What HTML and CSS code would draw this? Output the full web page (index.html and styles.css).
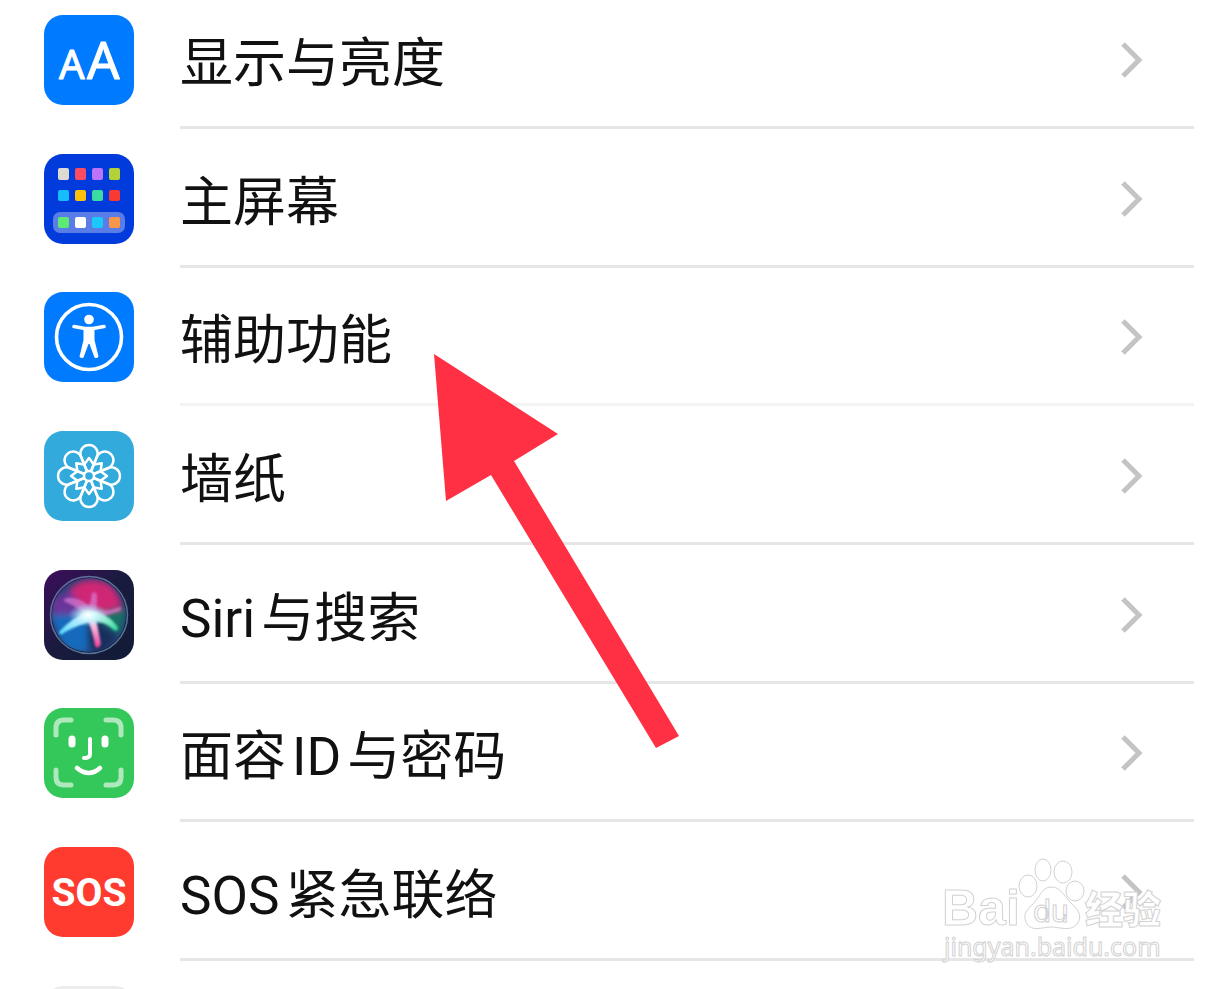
FILE: index.html
```html
<!DOCTYPE html>
<html lang="zh-CN">
<head>
<meta charset="utf-8">
<meta name="viewport" content="width=device-width, initial-scale=1">
<title>设置</title>
<link rel="stylesheet" href="styles.css">
</head>
<body>
<main class="screen">
  <nav class="settings" aria-label="设置">
    <a class="row" href="#display">
      <svg class="icon" viewBox="0 0 90 90" aria-hidden="true">
        <rect width="90" height="90" rx="19" fill="#007aff"/>
        <g class="icon-aa"><text x="15" y="64" font-size="40">A</text><text x="43" y="64" font-size="51">A</text></g>
      </svg>
      <span class="label">显示与亮度</span>
      <svg class="chevron" viewBox="0 0 24 40" aria-hidden="true"><path d="M3 4 19 20 3 36"/></svg>
    </a>
    <a class="row" href="#home">
      <svg class="icon" viewBox="0 0 90 90" aria-hidden="true">
        <rect width="90" height="90" rx="19" fill="#023bdb"/>
        <rect x="9" y="58" width="72" height="21" rx="7" fill="#5a7ce6"/>
        <rect x="14" y="14" width="11" height="12" rx="2" fill="#dedbd2"/>
        <rect x="31" y="14" width="11" height="12" rx="2" fill="#fc4c62"/>
        <rect x="48" y="14" width="11" height="12" rx="2" fill="#bb73f8"/>
        <rect x="65" y="14" width="11" height="12" rx="2" fill="#b2d236"/>
        <rect x="14" y="36" width="11" height="11" rx="2" fill="#16bdfb"/>
        <rect x="31" y="36" width="11" height="11" rx="2" fill="#fcc108"/>
        <rect x="48" y="36" width="11" height="11" rx="2" fill="#3bdba2"/>
        <rect x="65" y="36" width="11" height="11" rx="2" fill="#fa3a32"/>
        <rect x="14" y="63" width="11" height="11" rx="2" fill="#5cea72"/>
        <rect x="31" y="63" width="11" height="11" rx="2" fill="#fff"/>
        <rect x="48" y="63" width="11" height="11" rx="2" fill="#1cc8fa"/>
        <rect x="65" y="63" width="11" height="11" rx="2" fill="#f9964a"/>
      </svg>
      <span class="label">主屏幕</span>
      <svg class="chevron" viewBox="0 0 24 40" aria-hidden="true"><path d="M3 4 19 20 3 36"/></svg>
    </a>
    <a class="row row-faint" href="#accessibility">
      <svg class="icon" viewBox="0 0 90 90" aria-hidden="true">
        <rect width="90" height="90" rx="19" fill="#007aff"/>
        <circle cx="45" cy="45" r="32.5" fill="none" stroke="#fff" stroke-width="3.6"/>
        <circle cx="45" cy="27.5" r="4.8" fill="#fff"/>
        <path d="M30 34.500 41 36.500H49L60 34.500" fill="none" stroke="#fff" stroke-width="3.600" stroke-linecap="round" stroke-linejoin="round"/>
        <path d="M39.500 36H50.500V48L54.500 64.500Q53 67 50.500 65.500L45.500 52H44.500L39.500 65.500Q37 67 35.500 64.500L39.500 48Z" fill="#fff"/>
      </svg>
      <span class="label">辅助功能</span>
      <svg class="chevron" viewBox="0 0 24 40" aria-hidden="true"><path d="M3 4 19 20 3 36"/></svg>
    </a>
    <a class="row" href="#wallpaper">
      <svg class="icon" viewBox="0 0 90 90" aria-hidden="true">
        <defs><path id="petal" d="M42.900 40 40.200 33.500 45 27 49.800 33.500 47.100 40M40.200 33.500 37 25.800A8.600 8.600 0 1 1 53 25.800L49.800 33.500"/></defs>
        <rect width="90" height="90" rx="19" fill="#33aadc"/>
        <g fill="none" stroke="#fff" stroke-width="2.500" stroke-linejoin="round">
          <use href="#petal"/><use href="#petal" transform="rotate(45 45 45)"/>
          <use href="#petal" transform="rotate(90 45 45)"/><use href="#petal" transform="rotate(135 45 45)"/>
          <use href="#petal" transform="rotate(180 45 45)"/><use href="#petal" transform="rotate(225 45 45)"/>
          <use href="#petal" transform="rotate(270 45 45)"/><use href="#petal" transform="rotate(315 45 45)"/>
          <circle cx="45" cy="45" r="5"/>
        </g>
      </svg>
      <span class="label">墙纸</span>
      <svg class="chevron" viewBox="0 0 24 40" aria-hidden="true"><path d="M3 4 19 20 3 36"/></svg>
    </a>
    <a class="row" href="#siri">
      <svg class="icon" viewBox="0 0 90 90" aria-hidden="true">
        <defs>
          <linearGradient id="siri-bg" x1="0" y1="0" x2="1" y2="1"><stop offset="0" stop-color="#3d0d5c"/><stop offset=".5" stop-color="#191b3e"/><stop offset="1" stop-color="#101b35"/></linearGradient>
          <radialGradient id="siri-glow"><stop offset="0" stop-color="#fff"/><stop offset=".35" stop-color="#d5f9ff" stop-opacity=".85"/><stop offset="1" stop-color="#8bdcff" stop-opacity="0"/></radialGradient>
          <linearGradient id="siri-left" x1="1" y1="0" x2="0" y2="1"><stop offset="0" stop-color="#fff"/><stop offset="1" stop-color="#50d8fa"/></linearGradient>
          <linearGradient id="siri-down" x1="0" y1="0" x2="0" y2="1"><stop offset="0" stop-color="#fff"/><stop offset="1" stop-color="#ee3c9b"/></linearGradient>
          <linearGradient id="siri-right" x1="0" y1="0" x2="1" y2="1"><stop offset="0" stop-color="#fff"/><stop offset="1" stop-color="#2ad99c"/></linearGradient>
          <filter id="siri-soft" x="-30%" y="-30%" width="160%" height="160%"><feGaussianBlur stdDeviation="3"/></filter>
          <filter id="siri-edge" x="-30%" y="-30%" width="160%" height="160%"><feGaussianBlur stdDeviation=".8"/></filter>
          <clipPath id="siri-disc"><circle cx="45" cy="45" r="37"/></clipPath>
        </defs>
        <rect width="90" height="90" rx="19" fill="url(#siri-bg)"/>
        <g clip-path="url(#siri-disc)">
          <circle cx="45" cy="45" r="38" fill="#264076"/>
          <g filter="url(#siri-soft)">
            <path d="M20 28Q30 8 52 10T78 38L48 44Z" fill="#cf2575"/>
            <path d="M6 30 26 20 42 44 10 52Z" fill="#6b3599"/>
            <path d="M6 45 43 44 44 82H22Z" fill="#126bbc"/>
            <path d="M48 44 82 40 76 65Z" fill="#177266"/>
            <path d="M45 46 73 66 58 84 44 76Z" fill="#182d5c"/>
          </g>
          <g filter="url(#siri-edge)">
            <path d="M42 44Q30 36 20 31 20 27 29 28T45 36Q47 30 48 23 53 20 53 28T52 40Q64 42 76 37 79 36 76 41L54 48 42 48Z" fill="#d97bd0" fill-opacity=".7"/>
            <path d="M46 41Q27 48 15 62 16 67 21 62 36 54 49 51Z" fill="url(#siri-left)"/>
            <path d="M42 45Q49 62 51 76 54 80 57 74 54 58 51 45Z" fill="url(#siri-down)"/>
            <path d="M44 42 49 51Q62 52 70 60 76 62 73 56 66 46 52 42Z" fill="url(#siri-right)"/>
          </g>
          <ellipse cx="44" cy="45" rx="20" ry="12" fill="url(#siri-glow)"/>
        </g>
        <circle cx="45" cy="45" r="38.500" fill="none" stroke="#7aa4c4" stroke-opacity=".65" stroke-width="1.500"/>
      </svg>
      <span class="label"><span class="latin-start">Siri</span>与搜索</span>
      <svg class="chevron" viewBox="0 0 24 40" aria-hidden="true"><path d="M3 4 19 20 3 36"/></svg>
    </a>
    <a class="row" href="#faceid">
      <svg class="icon" viewBox="0 0 90 90" aria-hidden="true">
        <rect width="90" height="90" rx="19" fill="#34c759"/>
        <g fill="none" stroke-linecap="round">
          <path d="M12 27V20Q12 12 20 12H27M62 12H69Q77 12 77 20V27M77 62V69Q77 77 69 77H62M27 77H20Q12 77 12 69V62" stroke="#aee9bd" stroke-width="5"/>
          <path d="M28 31V36M61 31V36" stroke="#fff" stroke-width="7"/>
          <path d="M46 31V46Q46 50 40 50" stroke="#fff" stroke-width="4"/>
          <path d="M33 60Q45 70 56 60" stroke="#fff" stroke-width="4.500"/>
        </g>
      </svg>
      <span class="label">面容<span class="latin-inner">ID</span>与密码</span>
      <svg class="chevron" viewBox="0 0 24 40" aria-hidden="true"><path d="M3 4 19 20 3 36"/></svg>
    </a>
    <a class="row" href="#sos">
      <svg class="icon" viewBox="0 0 90 90" aria-hidden="true">
        <rect width="90" height="90" rx="19" fill="#ff3b30"/>
        <text class="icon-sos" x="45" y="59" text-anchor="middle">SOS</text>
      </svg>
      <span class="label"><span class="latin-start">SOS</span>紧急联络</span>
      <svg class="chevron" viewBox="0 0 24 40" aria-hidden="true"><path d="M3 4 19 20 3 36"/></svg>
    </a>
    <a class="row" href="#more" aria-label="更多">
      <span class="icon icon-blank"></span>
    </a>
  </nav>
  <svg class="arrow" viewBox="0 0 246 396" aria-hidden="true"><path d="M0 0 124 80 80 107 245 382 222 394 57 121 12 147Z" fill="#ff3043"/></svg>
  <svg class="watermark" viewBox="0 0 230 112" role="img" aria-label="Baidu 经验 jingyan.baidu.com">
    <g class="wm-shape">
      <text class="wm-bai" x="2" y="72">Bai</text>
      <ellipse cx="88" cy="33" rx="9" ry="11"/>
      <ellipse cx="103" cy="17" rx="8" ry="11"/>
      <ellipse cx="123" cy="19" rx="9" ry="11"/>
      <ellipse cx="135" cy="38" rx="9" ry="10"/>
      <path d="M111 34C121 34 124 43 131 50 140 58 142 64 137 71 131 79 119 74 111 74S92 79 87 71C82 63 86 57 93 51 100 44 102 34 111 34Z"/>
      <text class="wm-du" x="93" y="69">du</text>
      <text class="wm-cn" x="145" y="70">经验</text>
      <text class="wm-url" x="4" y="103">jingyan.baidu.com</text>
    </g>
  </svg>
</main>
</body>
</html>
```
FILE: styles.css
```css
* {
  box-sizing: border-box;
}

body {
  margin: 0;
  background: #fff;
  color: #111;
  font-family: Roboto, "Noto Sans CJK SC", sans-serif;
}

.screen {
  position: relative;
  height: 100vh;
  overflow: hidden;
}

.settings {
  display: flex;
  flex-direction: column;
  margin-top: -10px;
  padding-right: 37px;
  padding-left: 44px;
}

.row {
  display: flex;
  flex: none;
  align-items: center;
  height: 139px;
  padding-right: 50px;
  color: inherit;
  text-decoration: none;
  background: linear-gradient(#e6e6e6, #e6e6e6) 136px 100% / 100% 3px no-repeat;
}

.row:nth-child(3n) {
  height: 138px;
}

.row-faint {
  background-image: linear-gradient(#f3f3f3, #f3f3f3);
}

.icon {
  flex: none;
  width: 90px;
  height: 90px;
}

.icon-blank {
  border: 3px solid #ececec;
  border-radius: 19px;
}

.icon-aa {
  fill: #fff;
  stroke: #fff;
  stroke-width: 1;
  stroke-linejoin: round;
  font-family: "Noto Sans", sans-serif;
}

.icon-sos {
  fill: #fff;
  font-family: Roboto, sans-serif;
  font-size: 39px;
  font-weight: 700;
}

.label {
  flex: 1;
  margin-left: 46px;
  padding-top: 8px;
  font-size: 53px;
  line-height: 64px;
  white-space: nowrap;
}

.latin-start {
  margin-right: 6px;
}

.latin-inner {
  margin: 0 6px;
}

.chevron {
  flex: none;
  width: 24px;
  height: 40px;
  fill: none;
  stroke: #c4c4c6;
  stroke-width: 5;
}

.arrow {
  position: absolute;
  top: 354px;
  left: 434px;
  width: 246px;
  height: 396px;
}

.watermark {
  position: absolute;
  right: 61px;
  bottom: 24px;
  width: 230px;
  height: 112px;
}

.wm-shape {
  fill: #fff;
  stroke: #d2d2d2;
  stroke-width: 1;
}

.wm-bai {
  font: 700 50px "Liberation Sans", sans-serif;
}

.wm-du {
  font: 400 32px Roboto, sans-serif;
}

.wm-cn {
  font: 900 38px "Noto Sans CJK SC", sans-serif;
}

.wm-url {
  font: 400 25px "Noto Sans", sans-serif;
}
```
